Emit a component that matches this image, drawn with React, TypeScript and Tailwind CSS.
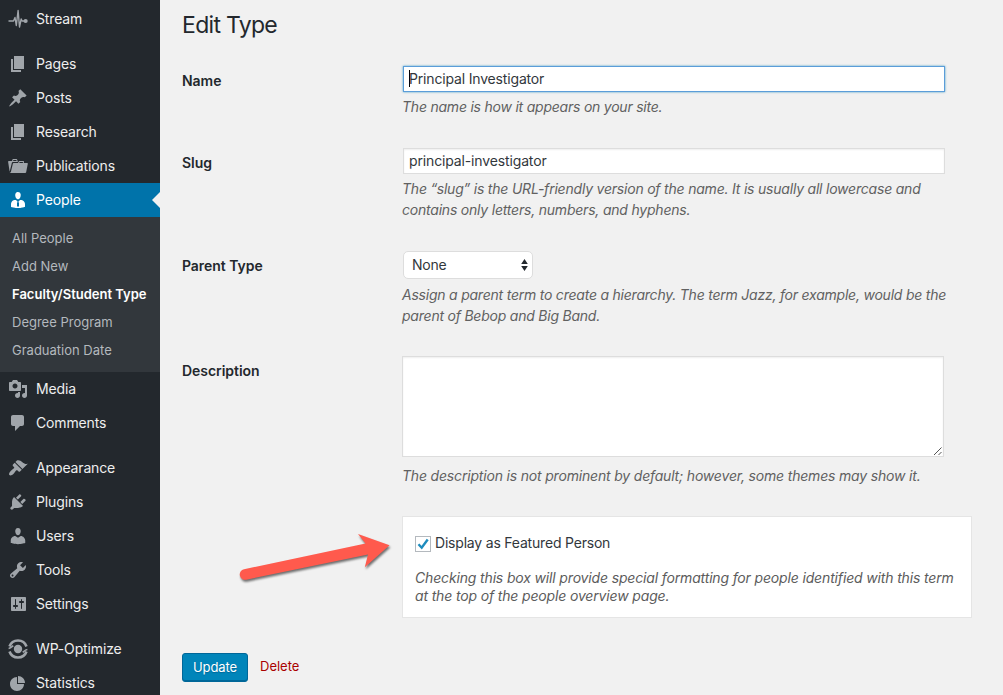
import type { ReactNode } from 'react';

const ICONS: Record<string, string> = {
  page: 'M6 15V2h10v13H6zm-1 1h8v2H3V5h2v11z',
  post: 'M10.44 3.02l1.82-1.82 6.36 6.35-1.83 1.82c-1.05-.68-2.48-.57-3.41.36l-.75.75c-.92.93-1.04 2.35-.35 3.41l-1.83 1.82-2.41-2.41-2.8 2.79c-.42.42-3.38 2.71-3.8 2.29s1.86-3.39 2.28-3.81l2.79-2.79L4.1 9.36l1.83-1.82c1.05.69 2.48.57 3.4-.36l.75-.75c.93-.92 1.05-2.35.36-3.41z',
  folder:
    'M4 5H.78c-.37 0-.74.32-.69.84l1.56 9.99S3.5 8.47 3.86 6.7c.11-.53.61-.7.98-.7H10s-.7-2.08-.77-2.31C9.11 3.25 8.89 3 8.45 3H5.14c-.36 0-.7.23-.8.64C4.25 4.04 4 5 4 5zm4.88 0h-4s.42-1 .87-1h2.13c.48 0 1 1 1 1zM2.67 16.25c-.31.47-.76.75-1.26.75h15.73c.54 0 .92-.31 1.03-.83.44-2.19 1.68-8.44 1.68-8.44.07-.5-.3-.73-.62-.73H16V5.53c0-.16-.26-.53-.66-.53h-3.76c-.52 0-.87.58-.87.58L10 7H5.59c-.32 0-.63.19-.69.5 0 0-1.59 6.7-1.72 7.33-.07.37-.22.99-.51 1.42zM15.38 7H11s.58-1 1.13-1h2.29c.71 0 .96 1 .96 1z',
  businessman:
    'M7.3 6l-.03-.19c-.04-.37-.05-.73-.03-1.08.02-.36.1-.71.25-1.04.14-.32.31-.61.52-.86s.49-.46.83-.6c.34-.15.72-.23 1.13-.23.69 0 1.26.2 1.71.59s.76.87.91 1.44.18 1.16.09 1.78l-.03.19c-.01.09-.05.25-.11.48-.05.24-.12.47-.2.69-.08.21-.19.45-.34.72-.14.27-.3.49-.47.69-.18.19-.4.34-.67.48-.27.13-.55.19-.86.19s-.59-.06-.87-.19c-.26-.13-.49-.29-.67-.5-.18-.2-.34-.42-.49-.66-.15-.25-.26-.49-.34-.73-.09-.25-.16-.47-.21-.67-.06-.21-.1-.37-.12-.5zm9.2 6.24c.41.7.5 1.41.5 2.14v2.49c0 .03-.12.08-.29.13-.18.04-.42.13-.97.27-.55.12-1.1.24-1.65.34s-1.19.19-1.95.27c-.75.08-1.46.12-2.13.12-.68 0-1.39-.04-2.14-.12-.75-.07-1.4-.17-1.98-.27-.58-.11-1.08-.23-1.56-.34-.49-.11-.8-.21-1.06-.29L3 16.87v-2.49c0-.75.07-1.46.46-2.15s.81-1.25 1.5-1.68C5.66 10.12 7.19 10 8 10l1.67 1.67L9 13v3l1.02 1.08L11 16v-3l-.68-1.33L11.97 10c.77 0 2.2.07 2.9.52.71.45 1.21 1.02 1.63 1.72z',
  media:
    'M13 11V4c0-.55-.45-1-1-1h-1.67L9 1H5L3.67 3H2c-.55 0-1 .45-1 1v7c0 .55.45 1 1 1h10c.55 0 1-.45 1-1zM7 4.5c1.38 0 2.5 1.12 2.5 2.5S8.38 9.5 7 9.5 4.5 8.38 4.5 7 5.62 4.5 7 4.5zM14 6h5v10.5c0 1.38-1.12 2.5-2.5 2.5S14 17.88 14 16.5s1.12-2.5 2.5-2.5c.17 0 .34.02.5.05V9h-3V6zm-4 8.05V13h2v3.5c0 1.38-1.12 2.5-2.5 2.5S7 17.88 7 16.5 8.12 14 9.5 14c.17 0 .34.02.5.05z',
  comments:
    'M5 2h9c1.1 0 2 .9 2 2v7c0 1.1-.9 2-2 2h-2l-5 5v-5H5c-1.1 0-2-.9-2-2V4c0-1.1.9-2 2-2z',
  appearance:
    'M14.48 11.06L7.41 3.99l1.5-1.5c.5-.56 2.3-.47 3.51.32 1.21.8 1.43 1.28 2.91 2.1 1.18.64 2.45 1.26 4.45.85zm-.71.71L6.7 4.7 4.93 6.47c-.39.39-.39 1.02 0 1.41l1.06 1.06c.39.39.39 1.03 0 1.42-.6.6-1.43 1.11-2.21 1.69-.35.26-.7.53-1.01.84C1.43 14.23.4 16.08 1.4 17.07c.99 1 2.84-.03 4.18-1.36.31-.31.58-.66.85-1.02.57-.78 1.08-1.61 1.69-2.21.39-.39 1.02-.39 1.41 0l1.06 1.06c.39.39 1.02.39 1.41 0z',
  plugins:
    'M13.11 4.36L9.87 7.6 8 5.73l3.24-3.24c.35-.34 1.05-.2 1.56.32.52.51.66 1.21.31 1.55zm-8 1.77l.91-1.12 9.01 9.01-1.19.84c-.71.71-2.63 1.16-3.82 1.16H6.14L4.9 17.26c-.59.59-1.54.59-2.12 0-.59-.58-.59-1.53 0-2.12l1.24-1.24v-3.88c0-1.13.4-3.19 1.09-3.89zm7.26 3.97l3.24-3.24c.34-.35 1.04-.21 1.55.31.52.51.66 1.21.31 1.55l-3.24 3.25z',
  users:
    'M10 9.25c-2.27 0-2.73-3.44-2.73-3.44C7 4.02 7.82 2 9.97 2c2.16 0 2.98 2.02 2.71 3.81 0 0-.41 3.44-2.68 3.44zm0 2.57L12.72 10c2.39 0 4.52 2.33 4.52 4.53v2.49s-3.65 1.13-7.24 1.13c-3.65 0-7.24-1.13-7.24-1.13v-2.49c0-2.25 1.94-4.48 4.47-4.48z',
  tools:
    'M16.68 9.77c-1.34 1.34-3.3 1.67-4.95.99l-5.41 6.52c-.99.99-2.59.99-3.58 0s-.99-2.59 0-3.57l6.52-5.42c-.68-1.65-.35-3.61.99-4.95 1.28-1.28 3.12-1.62 4.72-1.06l-2.89 2.89 2.82 2.82 2.86-2.87c.53 1.58.18 3.39-1.08 4.65zM3.81 16.21c.4.39 1.04.39 1.43 0 .4-.4.4-1.04 0-1.43-.39-.4-1.03-.4-1.43 0-.39.39-.39 1.03 0 1.43z',
  settings:
    'M18 16V4c0-.55-.45-1-1-1H4c-.55 0-1 .45-1 1v12c0 .55.45 1 1 1h13c.55 0 1-.45 1-1zM8 11h1c.55 0 1 .45 1 1s-.45 1-1 1H8v1.5c0 .28-.22.5-.5.5s-.5-.22-.5-.5V13H6c-.55 0-1-.45-1-1s.45-1 1-1h1V5.5c0-.28.22-.5.5-.5s.5.22.5.5V11zm5-2h-1c-.55 0-1-.45-1-1s.45-1 1-1h1V5.500c0-.28.22-.5.5-.5s.5.22.5.5V7h1c.55 0 1 .45 1 1s-.45 1-1 1h-1v5.500c0 .28-.22.5-.5.5s-.5-.22-.5-.5V9z',
  pie: 'M10 10V3c3.87 0 7 3.13 7 7h-7zM9 4v7h7c0 3.87-3.13 7-7 7s-7-3.13-7-7 3.13-7 7-7z',
};

function Glyph({ name }: { name: string }) {
  if (name === 'stream') {
    return (
      <svg viewBox="0 0 20 20" className="size-5 shrink-0" fill="none" stroke="currentColor">
        <path
          d="M.5 12h5l1.500-3.500L8.300 16.500 10.100 1.500 11.500 18 13.200 10l.9 2H17"
          strokeWidth="1.400"
          strokeLinejoin="round"
        />
        <circle cx="17.600" cy="12" r="2.100" fill="currentColor" stroke="none" />
      </svg>
    );
  }
  if (name === 'optimize') {
    return (
      <svg viewBox="0 0 20 20" className="size-5 shrink-0" fill="none" stroke="currentColor">
        <path d="M1.500 7.500C2.800 3.800 6.200 1.500 10 1.500s7.200 2.300 8.500 6" strokeWidth="2.600" />
        <path d="M1.500 12.500c1.300 3.700 4.700 6 8.500 6s7.200-2.300 8.500-6" strokeWidth="2.600" />
        <path d="M.6 9.500C2.600 9.300 3.900 7.800 5.200 6.600M19.400 10.500c-2 .2-3.300 1.700-4.600 2.900" strokeWidth="1.600" />
        <circle cx="10" cy="10" r="4.200" fill="currentColor" stroke="none" />
      </svg>
    );
  }
  return (
    <svg viewBox="0 0 20 20" className="size-5 shrink-0" fill="currentColor">
      <path d={ICONS[name]} />
    </svg>
  );
}

function MenuItem({ icon, label }: { icon: string; label: string }) {
  return (
    <a className="flex h-[34px] shrink-0 items-center gap-2 pl-2 text-[14px] tracking-[-0.01em] text-[#eee]">
      <span className="flex text-[#a0a5aa]">
        <Glyph name={icon} />
      </span>
      <span className="pb-0.5">{label}</span>
    </a>
  );
}

function Sidebar() {
  return (
    <nav className="flex h-full w-40 shrink-0 flex-col overflow-hidden bg-[#23282d] pt-0.5">
      <MenuItem icon="stream" label="Stream" />
      <div className="mt-[11px] shrink-0">
        <MenuItem icon="page" label="Pages" />
        <MenuItem icon="post" label="Posts" />
        <MenuItem icon="page" label="Research" />
        <MenuItem icon="folder" label="Publications" />
      </div>
      <a className="relative flex h-[34px] shrink-0 items-center gap-2 bg-[#0073aa] pl-2 text-[14px] tracking-[-0.01em] text-white">
        <Glyph name="businessman" />
        <span className="pb-0.5">People</span>
        <span className="absolute top-[9px] right-0 border-y-8 border-r-8 border-y-transparent border-r-[#f1f1f1]" />
      </a>
      <div className="h-[155px] shrink-0 bg-[#32373c] pt-[7px] pl-3 text-[13px] leading-7 whitespace-nowrap text-[#b4b9be]">
        <div>All People</div>
        <div>Add New</div>
        <div className="font-semibold text-white">Faculty/Student Type</div>
        <div>Degree Program</div>
        <div>Graduation Date</div>
      </div>
      <MenuItem icon="media" label="Media" />
      <MenuItem icon="comments" label="Comments" />
      <div className="mt-[11px] shrink-0">
        <MenuItem icon="appearance" label="Appearance" />
        <MenuItem icon="plugins" label="Plugins" />
        <MenuItem icon="users" label="Users" />
        <MenuItem icon="tools" label="Tools" />
        <MenuItem icon="settings" label="Settings" />
      </div>
      <div className="mt-[11px] shrink-0">
        <MenuItem icon="optimize" label="WP-Optimize" />
        <MenuItem icon="pie" label="Statistics" />
      </div>
    </nav>
  );
}

function Row({ label, className, children }: { label: string; className: string; children: ReactNode }) {
  return (
    <div className={`flex ${className}`}>
      <div className="w-[220px] shrink-0 pt-[5px] text-[14px] leading-5 font-semibold tracking-[-0.003em] text-[#23282d]">
        {label}
      </div>
      <div className="min-w-0">{children}</div>
    </div>
  );
}

const hint = 'text-[14px] leading-[21px] whitespace-nowrap text-[#616161] italic';

export default function App() {
  return (
    <div className="flex h-[695px] w-[1003px] overflow-hidden bg-[#f1f1f1] font-['Inter',sans-serif] text-[#32373c]">
      <Sidebar />
      <main className="relative flex-1 pl-[22px]">
        <h1 className="h-[66px] pt-[11px] text-[23px] leading-[29px] font-normal tracking-[-0.03em] text-[#23282d]">
          Edit Type
        </h1>

        <Row label="Name" className="h-[82px]">
          <div className="ml-px flex h-[26px] w-[542px] items-center border border-[#5b9dd9] bg-white pb-px pl-[5px] text-[14px] tracking-[-0.012em] shadow-[0_0_2px_rgba(30,140,190,0.8)]">
            <span className="-mr-px h-[17px] w-px bg-black" />
            Principal Investigator
          </div>
          <p className={`mt-[4px] tracking-[-0.016em] ${hint}`}>The name is how it appears on your site.</p>
        </Row>

        <Row label="Slug" className="h-[103px]">
          <div className="ml-px flex h-[26px] w-[542px] items-center border border-[#ddd] bg-white pb-px pl-[5px] text-[14px] tracking-[-0.01em] shadow-[inset_0_1px_2px_rgba(0,0,0,0.07)]">
            principal-investigator
          </div>
          <p className={`mt-[4px] tracking-[-0.015em] ${hint}`}>
            The “slug” is the URL-friendly version of the name. It is usually all lowercase and
            <br />
            contains only letters, numbers, and hyphens.
          </p>
        </Row>

        <Row label="Parent Type" className="h-[105px]">
          <div className="ml-px flex h-7 w-[130px] items-center justify-between rounded-[5px] border border-[#ddd] bg-white pr-1 pl-2 text-[14px] tracking-[-0.015em]">
            <span className="pb-px">None</span>
            <svg viewBox="0 0 7 12" className="h-3 w-[7px]" fill="#23282d">
              <path d="M3.500 0L6.800 5H.2zM3.500 12L.2 7h6.600z" />
            </svg>
          </div>
          <p className={`mt-[5px] tracking-[-0.016em] ${hint}`}>
            Assign a parent term to create a hierarchy. The term Jazz, for example, would be the
            <br />
            parent of Bebop and Big Band.
          </p>
        </Row>

        <Row label="Description" className="h-[160px]">
          <div className="flex h-[101px] w-[542px] items-end justify-end border border-[#ddd] bg-white shadow-[inset_0_1px_2px_rgba(0,0,0,0.07)]">
            <svg viewBox="0 0 10 10" className="size-2.5" stroke="#555" strokeWidth="1" fill="none">
              <path d="M1 9L8.500 1.500M5.500 9L8.500 6" />
            </svg>
          </div>
          <p className={`mt-[8px] tracking-[-0.013em] ${hint}`}>
            The description is not prominent by default; however, some themes may show it.
          </p>
        </Row>

        <section className="ml-[220px] h-[102px] w-[570px] border border-[#e5e5e5] bg-white pt-[16px] pl-3">
          <label className="flex items-center gap-1 text-[14px] leading-5 tracking-[-0.014em]">
            <span className="mt-px flex size-4 items-center justify-center border border-[#b4b9be] bg-white">
              <svg viewBox="0 0 12 12" className="size-3" fill="none" stroke="#1e8cbe" strokeWidth="2.400">
                <path d="M1.500 6.300L4.700 9.700 10.700 1.500" />
              </svg>
            </span>
            Display as Featured Person
          </label>
          <p className="mt-[16px] text-[14px] leading-[18px] tracking-[-0.011em] whitespace-nowrap text-[#5c5c5c] italic">
            Checking this box will provide special formatting for people identified with this term
            <br />
            at the top of the people overview page.
          </p>
        </section>

        <div className="mt-[35px] flex items-start">
          <button className="h-[29px] w-[66px] rounded-[3px] border border-[#006799] bg-[#0085ba] pb-px text-[13px] leading-[25px] tracking-[-0.01em] text-white shadow-[inset_0_-1px_0_#006799] [text-shadow:0_1px_1px_#006799]">
            Update
          </button>
          <a className="ml-3 pt-[3px] text-[13px] leading-5 text-[#a00]">Delete</a>
        </div>

        <svg
          viewBox="0 0 165 55"
          className="absolute top-[530px] left-[75px] h-[55px] w-[165px] drop-shadow-[1px_2px_1px_rgba(0,0,0,0.55)]"
          fill="#ff5a4d"
        >
          <path d="M154.500 15.200L123 3.900l7.500 9.600L9 39.200a5.200 5.200 0 0 0 2.200 10.500L133 24.600l-3.200 12.700z" />
        </svg>
      </main>
    </div>
  );
}
